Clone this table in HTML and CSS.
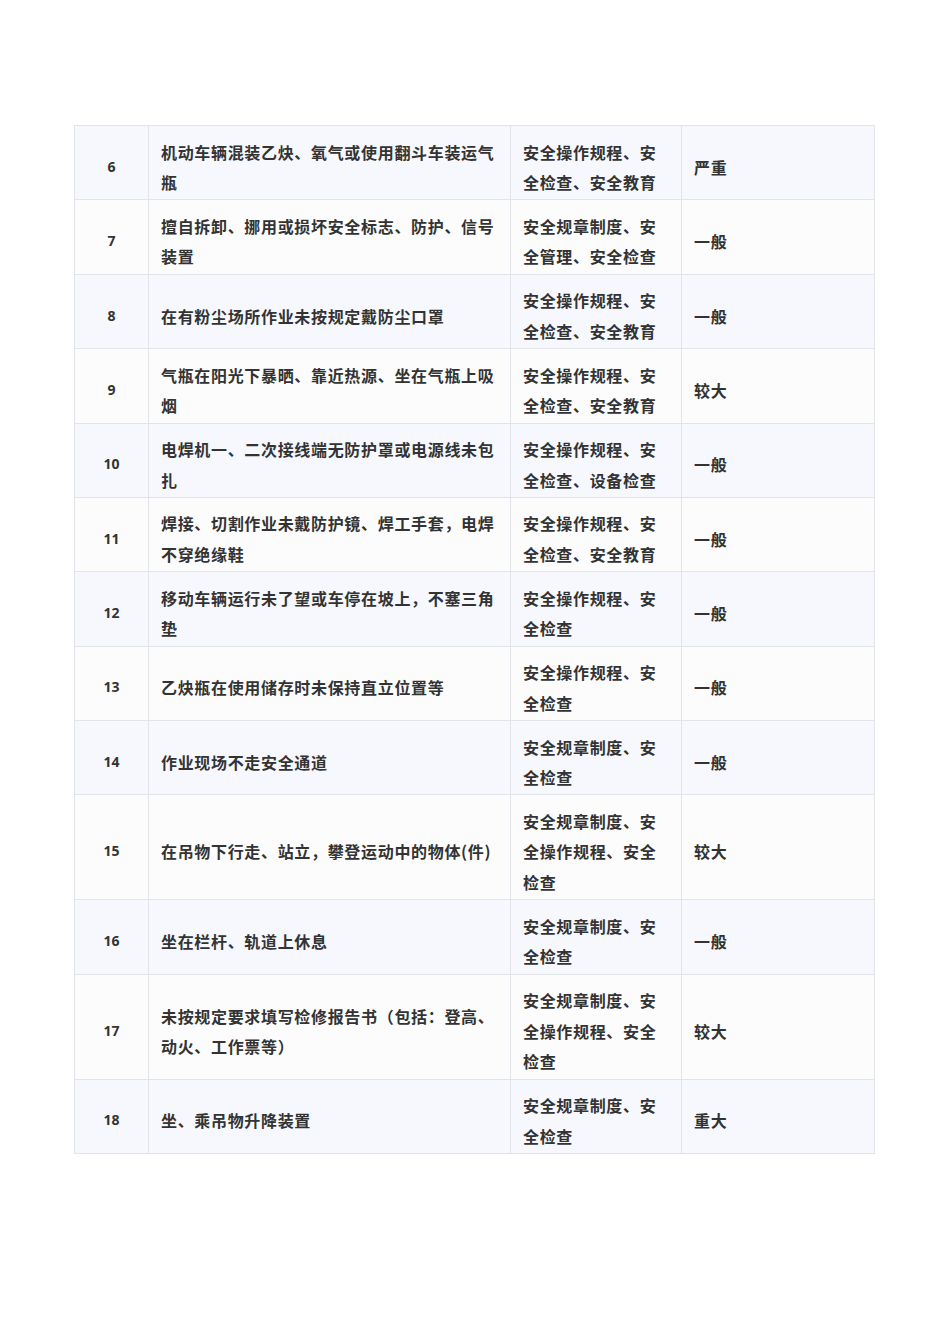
FILE: index.html
```html
<!DOCTYPE html>
<html lang="zh">
<head>
<meta charset="utf-8">
<link rel="stylesheet" href="styles.css">
</head>
<body>
<div class="page">
<table class="grid">
<colgroup><col class="c1"><col class="c2"><col class="c3"><col class="c4"></colgroup>
<tbody>
<tr><td class="num">6</td><td>机动车辆混装乙炔、氧气或使用翻斗车装运气瓶</td><td>安全操作规程、安全检查、安全教育</td><td>严重</td></tr>
<tr><td class="num">7</td><td>擅自拆卸、挪用或损坏安全标志、防护、信号装置</td><td>安全规章制度、安全管理、安全检查</td><td>一般</td></tr>
<tr><td class="num">8</td><td>在有粉尘场所作业未按规定戴防尘口罩</td><td>安全操作规程、安全检查、安全教育</td><td>一般</td></tr>
<tr><td class="num">9</td><td>气瓶在阳光下暴晒、靠近热源、坐在气瓶上吸烟</td><td>安全操作规程、安全检查、安全教育</td><td>较大</td></tr>
<tr><td class="num">10</td><td>电焊机一、二次接线端无防护罩或电源线未包扎</td><td>安全操作规程、安全检查、设备检查</td><td>一般</td></tr>
<tr><td class="num">11</td><td>焊接、切割作业未戴防护镜、焊工手套，电焊不穿绝缘鞋</td><td>安全操作规程、安全检查、安全教育</td><td>一般</td></tr>
<tr><td class="num">12</td><td>移动车辆运行未了望或车停在坡上，不塞三角垫</td><td>安全操作规程、安全检查</td><td>一般</td></tr>
<tr><td class="num">13</td><td>乙炔瓶在使用储存时未保持直立位置等</td><td>安全操作规程、安全检查</td><td>一般</td></tr>
<tr><td class="num">14</td><td>作业现场不走安全通道</td><td>安全规章制度、安全检查</td><td>一般</td></tr>
<tr><td class="num">15</td><td>在吊物下行走、站立，攀登运动中的物体(件)</td><td>安全规章制度、安全操作规程、安全检查</td><td>较大</td></tr>
<tr><td class="num">16</td><td>坐在栏杆、轨道上休息</td><td>安全规章制度、安全检查</td><td>一般</td></tr>
<tr><td class="num">17</td><td>未按规定要求填写检修报告书（包括：登高、动火、工作票等）</td><td>安全规章制度、安全操作规程、安全检查</td><td>较大</td></tr>
<tr><td class="num">18</td><td>坐、乘吊物升降装置</td><td>安全规章制度、安全检查</td><td>重大</td></tr>
</tbody>
</table>
</div>
</body>
</html>
```

FILE: styles.css
```css
html, body {
  margin: 0;
  padding: 0;
  background: #ffffff;
}
.page {
  padding: 125px 76px 0 74px;
}
.grid {
  width: 800px;
  border-collapse: collapse;
  table-layout: fixed;
  font-family: "Noto Sans CJK SC", "Noto Sans", sans-serif;
  font-weight: 700;
  color: #333333;
}
.c1 { width: 74px; }
.c2 { width: 362px; }
.c3 { width: 171px; }
.c4 { width: 193px; }
.grid td {
  border: 1px solid #e1e4e9;
  padding: 10.5px 12px 1.7px 12px;
  font-size: 16px;
  letter-spacing: 0.67px;
  line-height: 30.6px;
  vertical-align: middle;
  text-align: left;
}
.grid tr:nth-child(odd) td { background: #f6f8fd; }
.grid tr:nth-child(even) td { background: #fcfcfd; }
.grid td.num {
  text-align: center;
  font-family: "Open Sans", "Noto Sans", sans-serif;
  font-size: 14px;
  letter-spacing: 0;
  padding-left: 4px;
  padding-right: 4px;
}
```
